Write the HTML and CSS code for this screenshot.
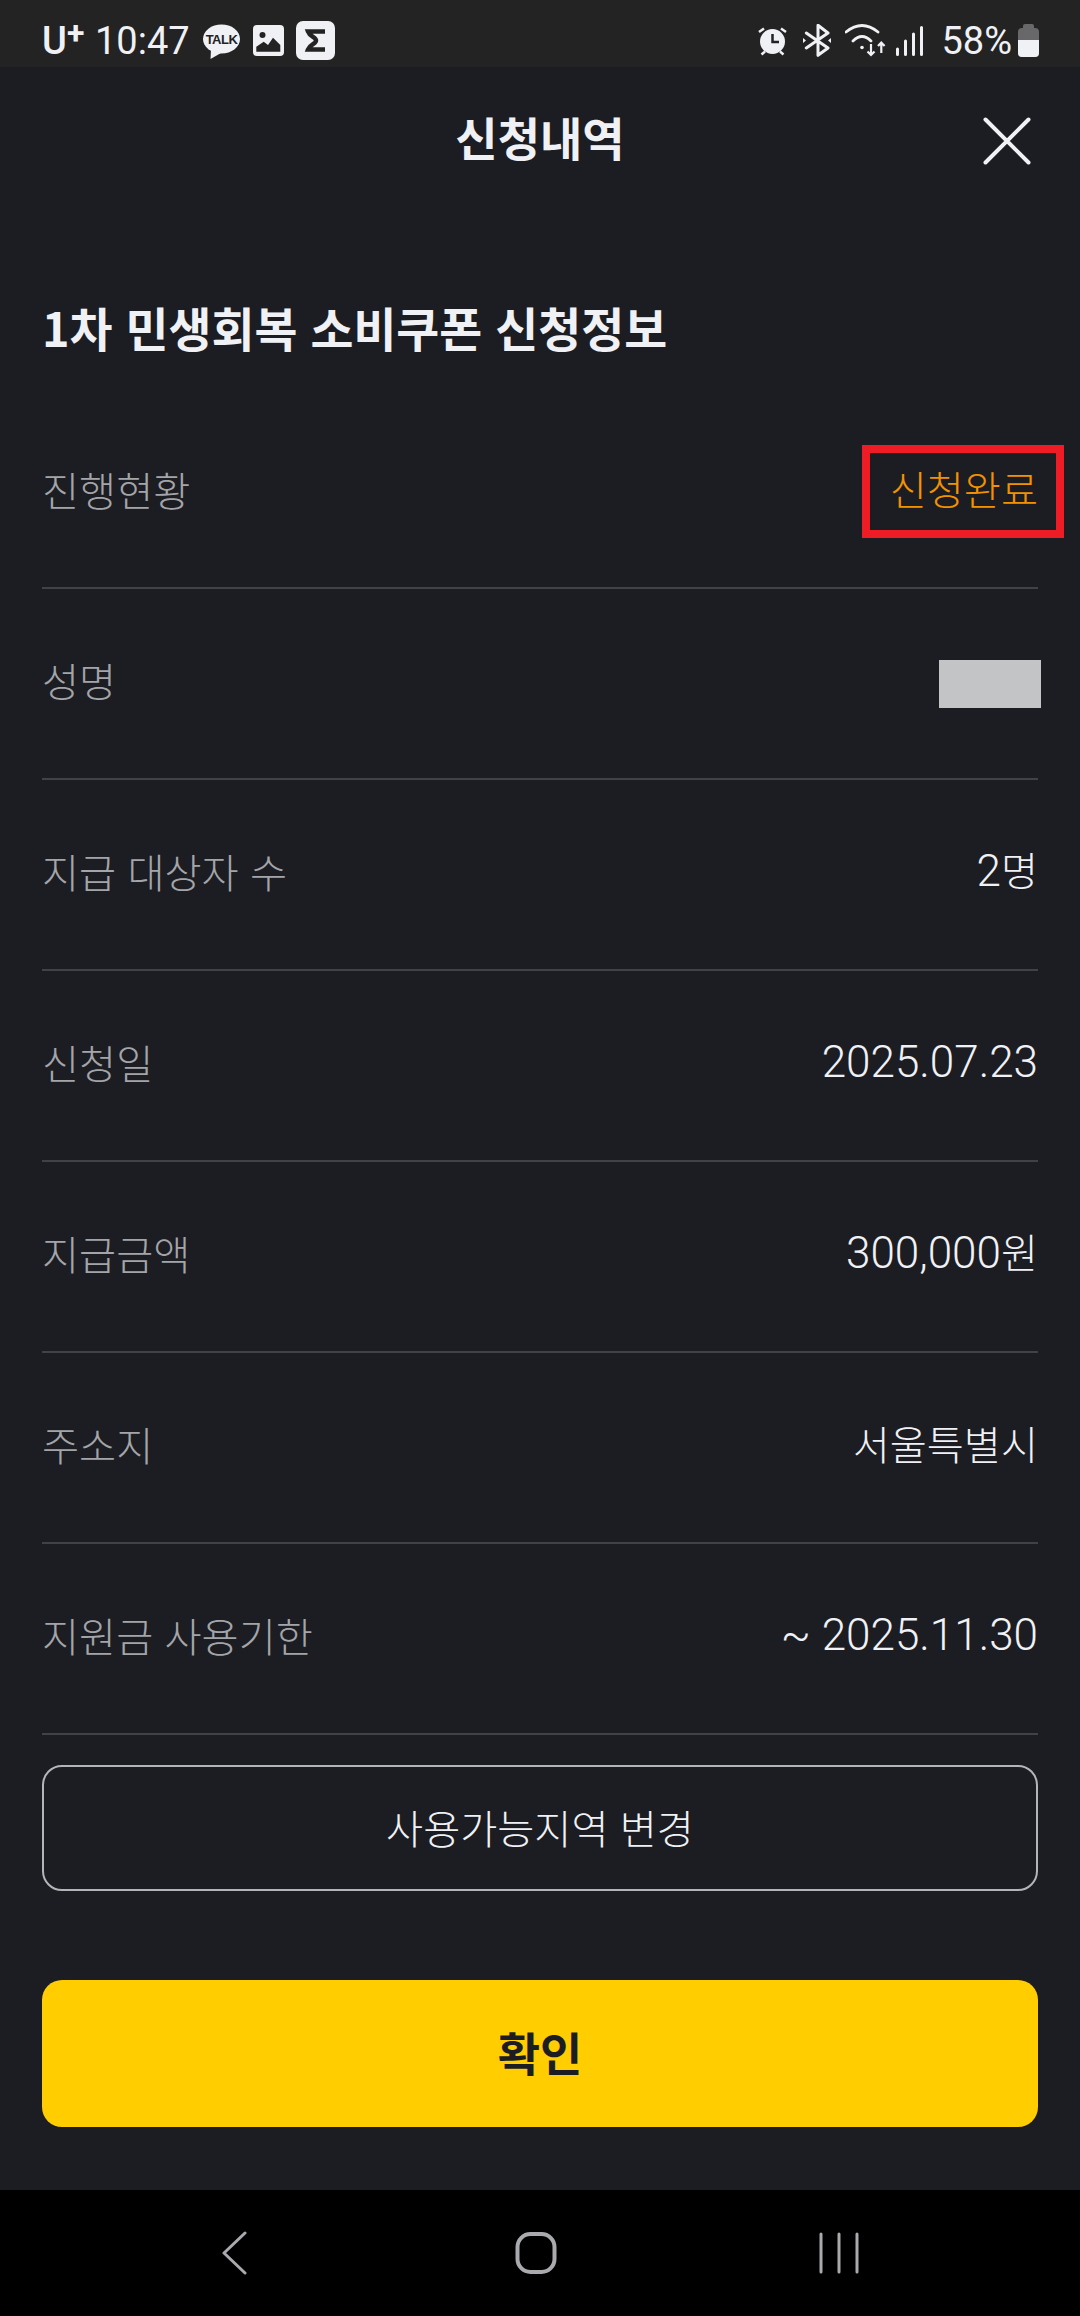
FILE: index.html
```html
<!DOCTYPE html>
<html lang="ko">
<head>
  <meta charset="UTF-8">
  <title>신청내역</title>
  <link rel="stylesheet" href="styles.css">
</head>
<body>
  <div class="status-bar">
    <div class="status-left">
      <span class="carrier">U<span class="carrier-plus">+</span></span>
      <span class="clock">10:47</span>
      <svg class="talk-icon" width="37" height="36" viewBox="0 0 37 36">
        <ellipse cx="18.500" cy="15" rx="18.500" ry="14.500" fill="#f0f1f5"/>
        <path d="M8 26 L7.500 35 L18 29 Z" fill="#f0f1f5"/>
        <text x="18.500" y="19.500" text-anchor="middle" class="talk-text">TALK</text>
      </svg>
      <svg class="pic-icon" width="31" height="31" viewBox="0 0 31 31">
        <rect width="31" height="31" rx="4" fill="#f0f1f5"/>
        <circle cx="9.500" cy="10" r="3" fill="#232323"/>
        <path d="M3.300 21.700 L10.700 16.700 L15 20 L20 12.700 L27.300 20 V26.700 H3.300 Z" fill="#232323"/>
      </svg>
      <svg class="sigma-icon" width="39" height="39" viewBox="0 0 39 39">
        <rect width="39" height="39" rx="7" fill="#f0f1f5"/>
        <path d="M29 10.500 H12 C14 16 20 16 20 19.500 C20 23 14 23 12 28.500 H29" fill="none" stroke="#232323" stroke-width="4.500"/>
      </svg>
    </div>
    <div class="status-right">
      <svg class="alarm-icon" width="29" height="30" viewBox="0 0 29 30">
        <circle cx="14.500" cy="15.500" r="12.500" fill="#f0f1f5"/>
        <path d="M14.500 8 V16 H21" fill="none" stroke="#232323" stroke-width="2.500"/>
        <path d="M1 6 L6 2.500 M28 6 L23 2.500 M3.500 28.500 L7 25.500 M25.500 28.500 L22 25.500" stroke="#f0f1f5" stroke-width="2.500" fill="none"/>
      </svg>
      <svg class="bt-icon" width="28" height="33" viewBox="0 0 28 33">
        <path d="M3.300 9 L25 24 L15 31.300 V1.300 L25 9 L3.300 24" fill="none" stroke="#f0f1f5" stroke-width="3" stroke-linejoin="round" stroke-linecap="round"/>
        <path d="M0 14 L3 16.500 L0 19 Z M28 14 L25 16.500 L28 19 Z" fill="#f0f1f5"/>
      </svg>
      <svg class="wifi-icon" width="41" height="33" viewBox="0 0 41 33">
        <path d="M1 8 Q17 -5 33 8 M8 17 Q17 8 26 17" fill="none" stroke="#f0f1f5" stroke-width="2.800" stroke-linecap="round"/>
        <circle cx="17" cy="23.500" r="1.800" fill="#f0f1f5"/>
        <path d="M26 20 V31 M22.500 27.500 L26 31 L29.500 27.500 M36.300 29 V18.500 M33 22 L36.300 18.500 L39.600 22" fill="none" stroke="#f0f1f5" stroke-width="2.200"/>
      </svg>
      <svg class="signal-icon" width="27" height="30" viewBox="0 0 27 30">
        <path d="M1.500 23 V28.500 M9.500 15 V28.500 M17.500 8 V28.500 M25.500 1.500 V28.500" stroke="#f0f1f5" stroke-width="3" stroke-linecap="round" fill="none"/>
      </svg>
      <span class="battery-text">58%</span>
      <svg class="battery-icon" width="21" height="33" viewBox="0 0 21 33">
        <rect x="5" y="0" width="11" height="8" rx="2" fill="#68686a"/>
        <rect x="0" y="4" width="21" height="29" rx="4" fill="#68686a"/>
        <path d="M0 16 H21 V29 A4 4 0 0 1 17 33 H4 A4 4 0 0 1 0 29 Z" fill="#f0f1f5"/>
      </svg>
    </div>
  </div>

  <main class="sheet">
    <header class="sheet-head">
      <h1>신청내역</h1>
      <svg class="close-icon" width="48" height="48" viewBox="0 0 48 48">
        <path d="M2.500 2.500 L45.500 45.500 M45.500 2.500 L2.500 45.500" stroke="#f0f1f5" stroke-width="4" stroke-linecap="round"/>
      </svg>
    </header>

    <h2 class="section-title">1차 민생회복 소비쿠폰 신청정보</h2>

    <div class="info-list">
      <div class="info-row">
        <span class="info-label">진행현황</span>
        <span class="info-value status-done">신청완료</span>
      </div>
      <div class="info-row">
        <span class="info-label">성명</span>
        <span class="name-mask"></span>
      </div>
      <div class="info-row">
        <span class="info-label">지급 대상자 수</span>
        <span class="info-value"><span class="num">2</span>명</span>
      </div>
      <div class="info-row">
        <span class="info-label">신청일</span>
        <span class="info-value"><span class="num">2025.07.23</span></span>
      </div>
      <div class="info-row">
        <span class="info-label">지급금액</span>
        <span class="info-value"><span class="num">300,000</span>원</span>
      </div>
      <div class="info-row">
        <span class="info-label">주소지</span>
        <span class="info-value">서울특별시</span>
      </div>
      <div class="info-row">
        <span class="info-label">지원금 사용기한</span>
        <span class="info-value"><span class="num">~ 2025.11.30</span></span>
      </div>
    </div>

    <button class="btn-outline">사용가능지역 변경</button>
    <button class="btn-confirm">확인</button>
  </main>

  <nav class="nav-bar">
    <svg class="nav-back" width="26" height="44" viewBox="0 0 26 44">
      <path d="M24 2 L3 22 L24 42" fill="none" stroke="#a9aaae" stroke-width="3" stroke-linecap="round" stroke-linejoin="round"/>
    </svg>
    <svg class="nav-home" width="42" height="44" viewBox="0 0 42 44">
      <rect x="2.500" y="3" width="37" height="38" rx="13" fill="none" stroke="#a9aaae" stroke-width="4"/>
    </svg>
    <svg class="nav-recent" width="40" height="42" viewBox="0 0 40 42">
      <path d="M2 2 V40 M20 2 V40 M38 2 V40" stroke="#a9aaae" stroke-width="3" stroke-linecap="round"/>
    </svg>
  </nav>
</body>
</html>
```

FILE: styles.css
```css
* {
  box-sizing: border-box;
}
html, body {
  margin: 0;
  padding: 0;
}
body {
  width: 1080px;
  height: 2316px;
  display: flex;
  flex-direction: column;
  background-color: #1c1d22;
  color: #f0f1f5;
  font-family: "Noto Sans CJK KR", "Noto Sans", sans-serif;
  overflow: hidden;
}

/* status bar */
.status-bar {
  height: 67px;
  flex: none;
  display: flex;
  justify-content: space-between;
  align-items: center;
  padding: 14px 41px 0 42px;
  background-color: #232323;
  font-family: Roboto, "Noto Sans", sans-serif;
  font-size: 38px;
}
.status-left, .status-right {
  display: flex;
  align-items: center;
}
.carrier {
  font-weight: 500;
  width: 43px;
  white-space: nowrap;
  line-height: 44px;
}
.carrier-plus {
  font-size: 32px;
  font-weight: 700;
  vertical-align: 10px;
  line-height: 0;
}
.clock {
  margin-left: 10px;
}
.talk-icon {
  margin-left: 13px;
  margin-top: 2px;
}
.talk-text {
  font: 700 13px "Liberation Sans", sans-serif;
  letter-spacing: -0.5px;
  fill: #232323;
}
.pic-icon {
  margin-left: 13px;
}
.sigma-icon {
  margin-left: 12px;
}
.bt-icon {
  margin-left: 16px;
}
.wifi-icon {
  margin-left: 14px;
}
.signal-icon {
  margin-left: 10px;
}
.battery-text {
  margin-left: 18px;
}
.battery-icon {
  margin-left: 6px;
}

/* sheet */
.sheet {
  flex: 1;
  padding: 0 42px;
  display: flex;
  flex-direction: column;
}
.sheet-head {
  height: 135px;
  position: relative;
  display: flex;
  justify-content: center;
  align-items: center;
}
.sheet-head h1 {
  margin: 0;
  padding-top: 2px;
  font-size: 46px;
  font-weight: 700;
}
.close-icon {
  position: absolute;
  right: 7px;
  top: 50px;
}
.section-title {
  margin: 93px 0 0;
  font-size: 46.700px;
  line-height: 64px;
  font-weight: 700;
}
.info-list {
  margin-top: 39px;
}
.info-row {
  height: 191px;
  display: flex;
  justify-content: space-between;
  align-items: center;
  padding-bottom: 9px;
  border-bottom: 2px solid #414245;
  font-size: 40.300px;
  font-weight: 300;
}
.info-label {
  color: #a4a5a9;
}
.info-value {
  line-height: 58px;
}
.num {
  font-family: Roboto, sans-serif;
  font-size: 44px;
  font-weight: 300;
}
.status-done {
  color: #f39200;
  position: relative;
}
.status-done::after {
  content: "";
  position: absolute;
  left: -28px;
  right: -26px;
  top: -14px;
  bottom: -21px;
  border: 8px solid #ee1c25;
}
.name-mask {
  width: 102px;
  height: 48px;
  margin: 9px -3px 0 0;
  background-color: #c3c4c6;
}

/* buttons */
.btn-outline {
  margin-top: 30px;
  height: 126px;
  padding-bottom: 5px;
  background: none;
  border: 2px solid #b4b5b8;
  border-radius: 20px;
  color: #f0f1f5;
  font: 300 40.300px "Noto Sans CJK KR", sans-serif;
}
.btn-confirm {
  margin-top: 89px;
  height: 147px;
  padding-bottom: 6px;
  background-color: #ffcd00;
  border: none;
  border-radius: 20px;
  color: #1c1d22;
  font: 700 46px "Noto Sans CJK KR", sans-serif;
}

/* nav bar */
.nav-bar {
  height: 126px;
  flex: none;
  background-color: #000;
  display: flex;
  align-items: center;
  padding-left: 221px;
}
.nav-home {
  margin: 0 262px 0 268px;
}
```
